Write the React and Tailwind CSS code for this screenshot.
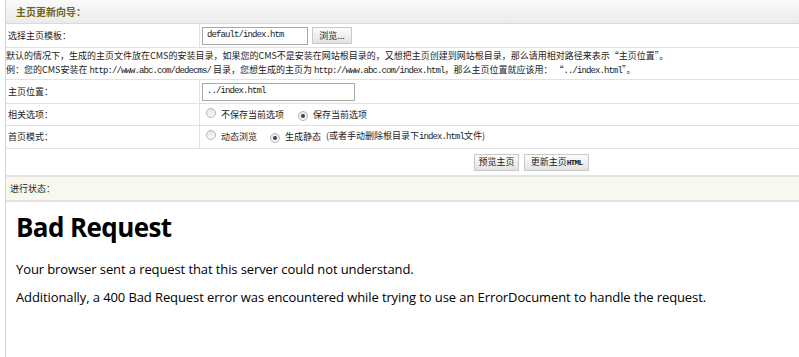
import React from "react";

const cjk = "font-['SimSun','Noto_Sans_CJK_SC',sans-serif]";

function Mono({ children }) {
  return (
    <span className="font-['Liberation_Mono',monospace] text-[9px] tracking-[-0.9px]">{children}</span>
  );
}

function Radio({ checked }) {
  return (
    <span className="inline-flex items-center justify-center w-[10px] h-[10px] rounded-full border border-[#b5b5b5] bg-gradient-to-b from-[#e6e6e6] to-[#fafafa] shrink-0">
      {checked && <span className="w-[4px] h-[4px] rounded-full bg-[#444]" />}
    </span>
  );
}

function Row({ label, children, h }) {
  return (
    <div className={`grid grid-cols-[194px_1fr] border-b border-[#e1e1e1] ${h}`}>
      <div className="border-r border-[#e1e1e1] flex items-center pl-[2px]">{label}</div>
      <div className="flex items-center pl-[2px]">{children}</div>
    </div>
  );
}

function Btn({ children, w }) {
  return (
    <span className={`inline-flex items-center justify-center h-[17px] ${w} border border-[#c8c8c8] bg-gradient-to-b from-[#fdfdfd] to-[#e2e2e2] text-[9px] text-[#222]`}>
      <span>{children}</span>
    </span>
  );
}

export default function App() {
  return (
    <div className={`w-[799px] h-[357px] bg-white overflow-hidden text-[9px] text-[#222] ${cjk}`}>
      <div className="ml-[5px] h-full border-l border-[#d6d6d6] flex flex-col">
        {/* header */}
        <div className="h-[24px] border-b border-[#dadada] bg-gradient-to-b from-[#fbfbfb] to-[#ebebeb] flex items-center pl-[10px]">
          <span className="text-[#6f6417] font-bold text-[10px]">主页更新向导：</span>
        </div>

        <Row label="选择主页模板：" h="h-[24px]">
          <span className="w-[106px] h-[18px] border border-[#a9a9a9] bg-white flex items-center pl-[4px]">
            <Mono>default/index.htm</Mono>
          </span>
          <span className="ml-[4px]"><Btn w="w-[40px]">浏览...</Btn></span>
        </Row>

        <div className="h-[32px] border-b border-[#e1e1e1] flex flex-col justify-center leading-[14px] whitespace-nowrap">
          <div>默认的情况下，生成的主页文件放在CMS的安装目录，如果您的CMS不是安装在网站根目录的，又想把主页创建到网站根目录，那么请用相对路径来表示“主页位置”。</div>
          <div>
            例：您的CMS安装在 <Mono>http://www.abc.com/dedecms/</Mono> 目录，您想生成的主页为 <Mono>http://www.abc.com/index.html</Mono>，那么主页位置就应该用： “<Mono>../index.html</Mono>”。
          </div>
        </div>

        <Row label="主页位置：" h="h-[24px]">
          <span className="w-[153px] h-[18px] border border-[#a9a9a9] bg-white flex items-center pl-[4px]">
            <Mono>../index.html</Mono>
          </span>
        </Row>

        <Row label="相关选项：" h="h-[22px]">
          <span className="ml-[4px]"><Radio /></span>
          <span className="ml-[5px]">不保存当前选项</span>
          <span className="ml-[14px]"><Radio checked /></span>
          <span className="ml-[5px]">保存当前选项</span>
        </Row>

        <Row label="首页模式：" h="h-[23px]">
          <span className="ml-[4px]"><Radio /></span>
          <span className="ml-[5px]">动态浏览</span>
          <span className="ml-[13px]"><Radio checked /></span>
          <span className="ml-[5px]">生成静态</span>
          <span className="ml-[5px]">(或者手动删除根目录下<Mono>index.html</Mono>文件)</span>
        </Row>

        <div className="h-[28px] border-b-2 border-[#e4e4e4] flex items-center pl-[468px] gap-[5px]">
          <Btn w="w-[45px]">预览主页</Btn>
          <Btn w="w-[65px]">更新主页<span className="font-['Liberation_Mono',monospace] text-[8px] tracking-[-0.9px] font-bold">HTML</span></Btn>
        </div>

        <div className="h-[25px] border-b-2 border-[#e2e2e2] bg-[#f8f9ec] flex items-center pl-[4px]">
          进行状态：
        </div>

        <div className="pl-[10px] text-black font-['Open_Sans',sans-serif]">
          <h1 className="text-[26px] font-bold leading-[30px] mt-[10px] tracking-[-0.6px]">Bad Request</h1>
          <p className="text-[13px] leading-[18px] mt-[18px] tracking-[-0.1px]">Your browser sent a request that this server could not understand.</p>
          <p className="text-[13px] leading-[18px] mt-[10px] tracking-[-0.1px]">Additionally, a 400 Bad Request error was encountered while trying to use an ErrorDocument to handle the request.</p>
        </div>
      </div>
    </div>
  );
}
